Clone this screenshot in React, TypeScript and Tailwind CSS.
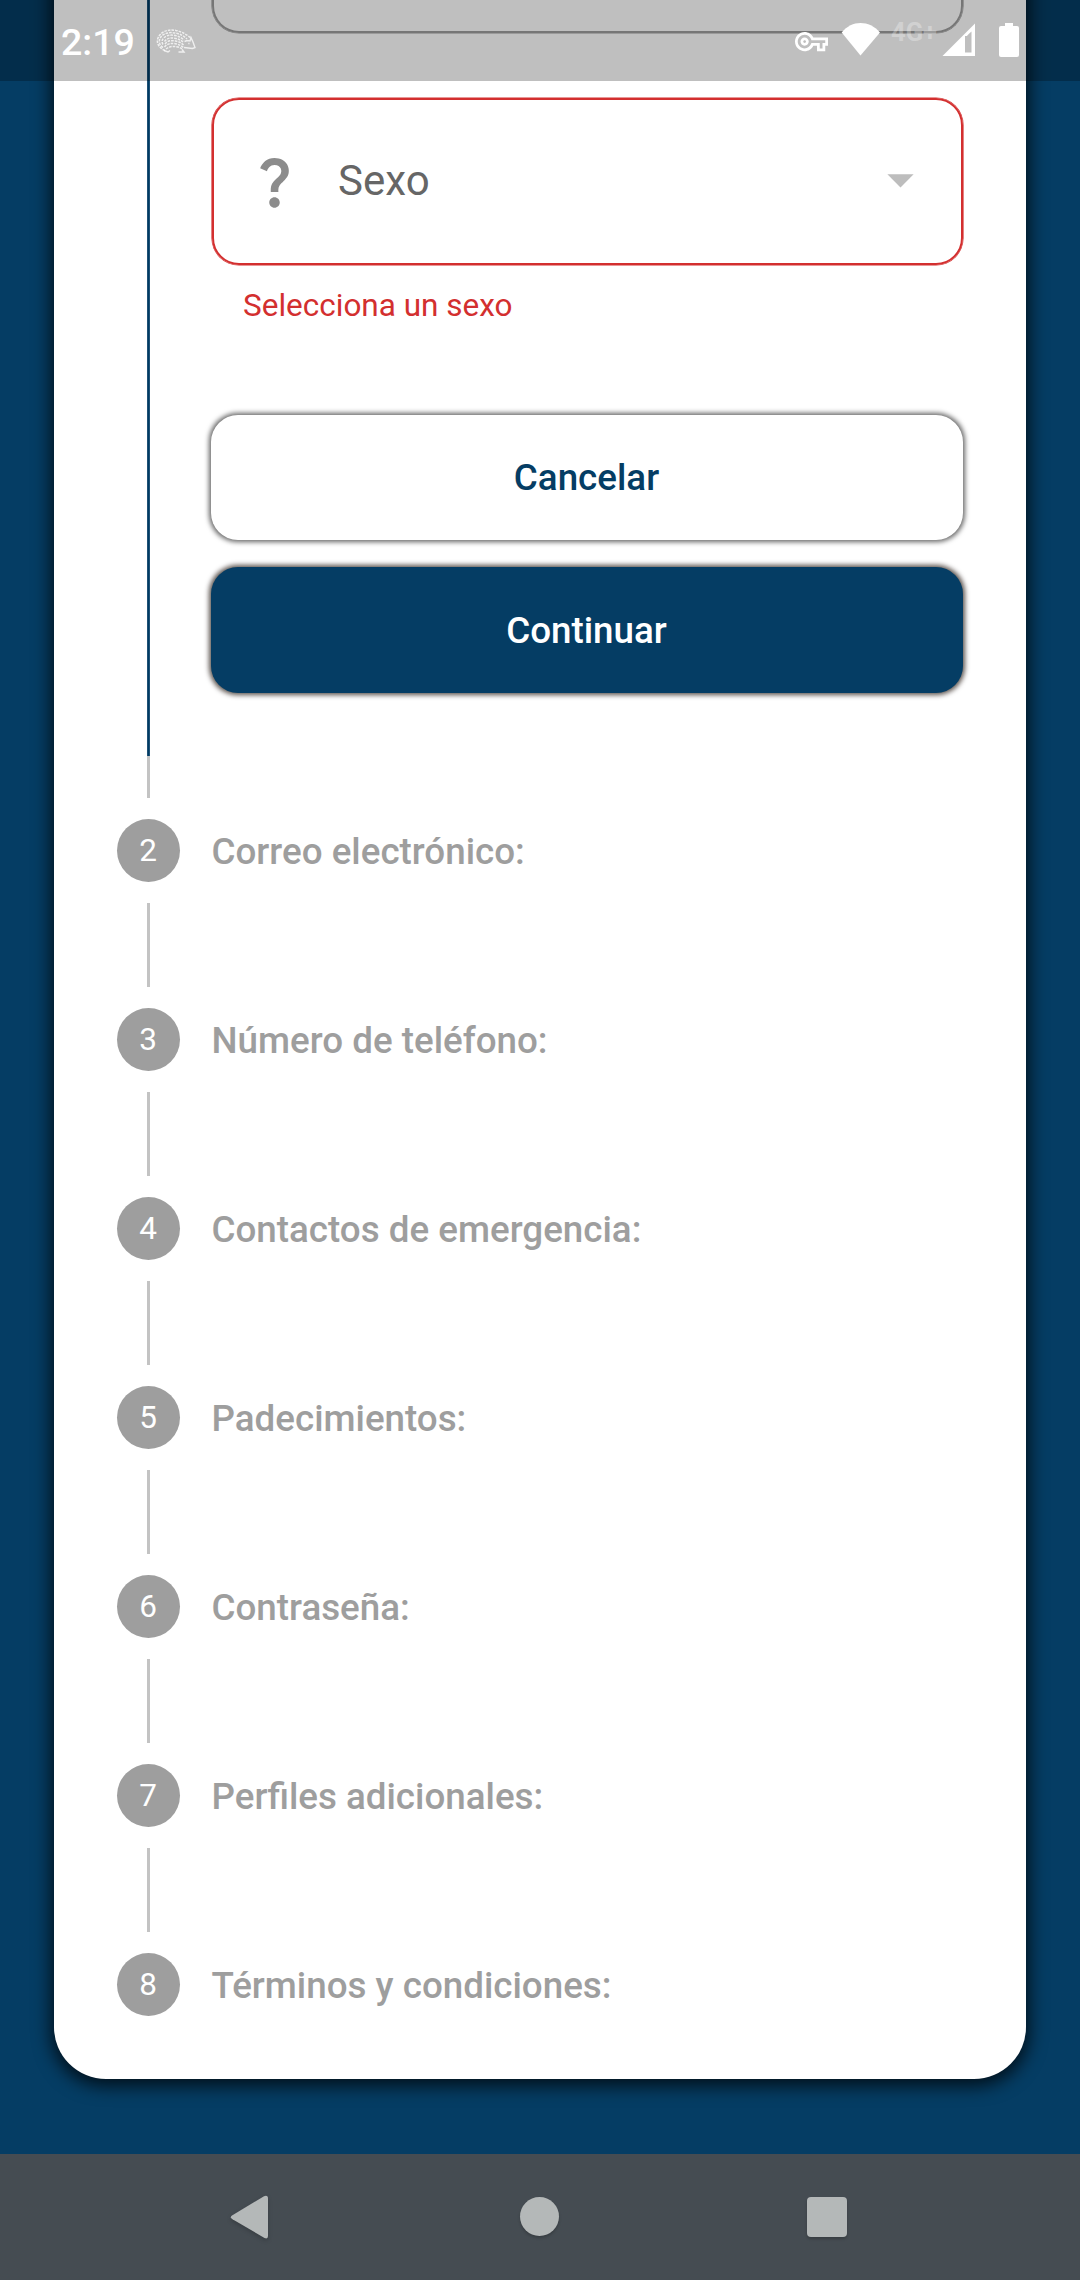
import React from "react";

const pending = [
  { n: 2, label: "Correo electrónico:" },
  { n: 3, label: "Número de teléfono:" },
  { n: 4, label: "Contactos de emergencia:" },
  { n: 5, label: "Padecimientos:" },
  { n: 6, label: "Contraseña:" },
  { n: 7, label: "Perfiles adicionales:" },
  { n: 8, label: "Términos y condiciones:" },
];

function Hedgehog() {
  return (
    <svg className="mt-[29px] ml-[21px] h-[24px] w-[40px]" viewBox="0 0 40 24" fill="none" stroke="#fff" strokeOpacity="0.75">
      <g strokeWidth="1.5" strokeDasharray="2.6 1">
        <path d="M9 21.500C3 19 0 14 2 9C5 2 13 0 20 1.500C26 2.500 31 6 35 9" />
        <path d="M7 18.500C3 16 2.500 12 4.500 8.500C7 4.500 13 2.800 19 4C24 4.800 28 7 31 10" />
        <path d="M7 15.500C5.500 13 6 10.500 8 8.700C11 6 15 5.600 19.500 6.600C23.500 7.500 26 9 28 11" />
        <path d="M8.500 12.500C11 9 14.500 8.500 18.500 9.200C22.500 10 25 11 27.500 13.500" />
        <path d="M9 15C11.500 11.500 15.500 11.200 19.500 12C23 12.700 25.500 14 27.500 16" />
        <path d="M8.500 18C11.500 14.500 15.500 14 19.500 14.700C23 15.500 25.500 17 27.500 18.500" />
        <path d="M10 20C13 17.500 17 17 20.500 17.700C23.500 18.300 25 19 27 20.500" />
      </g>
      <g strokeWidth="1.4">
        <path d="M28.500 12.500L31 11.500L34 12L35 8.500L37 13L39 18.500L36.500 19.500L28 18.500" />
        <path d="M8 21.500L12 23L14 21.500M22.500 23H28L26 20.500" />
        <path d="M32.300 14.500h1.200" />
      </g>
    </svg>
  );
}

function StatusBar() {
  return (
    <div className="absolute inset-x-0 top-0 z-10 flex h-[81px] items-start bg-black/25 text-white">
      <span className="mt-[20px] ml-[61px] w-[74px] text-[37.500px] leading-[44px] font-medium whitespace-nowrap">2:19</span>
      <Hedgehog />
      <div className="ml-auto flex items-start">
        <svg className="mt-[25px] h-[33px] w-[33px]" viewBox="0 0 24 24" fill="currentColor">
          <path d="M22 19h-6v-4h-2.680c-1.140 2.420-3.600 4-6.320 4-3.860 0-7-3.140-7-7s3.140-7 7-7c2.720 0 5.170 1.580 6.320 4H24v6h-2v4zm-4-2h2v-4h2v-2H11.940l-.23-.67C11.010 8.340 9.110 7 7 7c-2.760 0-5 2.240-5 5s2.240 5 5 5c2.110 0 4.010-1.340 4.710-3.330l.23-.67H18v4zM7 15c-1.650 0-3-1.350-3-3s1.350-3 3-3 3 1.350 3 3-1.350 3-3 3zm0-4c-.55 0-1 .45-1 1s.45 1 1 1 1-.45 1-1-.45-1-1-1z" />
        </svg>
        <svg className="mt-[23px] ml-[13px] h-[33px] w-[40px]" viewBox="0 0 40 33" fill="currentColor">
          <path d="M0.700 9.500C6 3 12.500 0 19.500 0C26.500 0 33.500 3 39 9.500L19.500 32.500Z" />
        </svg>
        <span className="mt-[17px] ml-[10px] w-[46px] text-[25.500px] leading-[30px] font-bold text-white/30">4G+</span>
        <svg className="mt-[23px] ml-[5px] h-[33px] w-[33px]" viewBox="0 0 33 33" fill="currentColor" fillRule="evenodd">
          <path d="M0.500 33L33 0.500V33ZM23 13V29.500H29.500V8.500C27 11 25.500 12 25 13Z" />
        </svg>
        <svg className="mt-[23px] mr-[61px] ml-[24px] h-[34px] w-[20px]" viewBox="0 0 20 34" fill="currentColor">
          <path d="M6 0H14V3H18Q20 3 20 5V32Q20 34 18 34H2Q0 34 0 32V5Q0 3 2 3H6Z" />
        </svg>
      </div>
    </div>
  );
}

function ActiveStep() {
  return (
    <section className="flex gap-[32px]">
      <div className="flex w-[63px] justify-center">
        <div className="w-[3px] border-x border-[#1e5075] bg-[#003b63]" />
      </div>
      <div className="flex h-[820px] w-[751px] flex-col">
        <div className="h-[97px] rounded-b-[27px] border-2 border-t-0 border-[#9e9e9e] shadow-[0_0_0_0.6px_#9e9e9e]" />
        <div className="mt-[65px] flex h-[167px] items-center rounded-[27px] border-2 border-[#d32f2f] pr-[29px] pl-[29px] shadow-[0_0_0_0.6px_#d32f2f]">
          <svg className="h-[63px] w-[63px] text-[#8c8c8c]" viewBox="0 0 24 24" fill="currentColor">
            <path d="M11.070 12.850c.77-1.390 2.250-2.210 3.110-3.440.91-1.290.4-3.700-2.180-3.700-1.690 0-2.520 1.280-2.870 2.340L6.540 6.960C7.250 4.830 9.180 3 11.990 3c2.350 0 3.960 1.070 4.780 2.410.7 1.150 1.110 3.300.03 4.900-1.200 1.770-2.350 2.310-2.970 3.450-.25.46-.35.76-.35 2.240h-2.890c-.01-.78-.13-2.050.48-3.150zM14 20c0 1.100-.9 2-2 2s-2-.9-2-2 .9-2 2-2 2 .9 2 2z" />
          </svg>
          <span className="mb-[1px] ml-[32px] text-[42px] leading-[50px] text-[#666666]">Sexo</span>
          <svg className="mb-[4px] ml-auto h-[63px] w-[63px] text-[#bdbdbd]" viewBox="0 0 24 24" fill="currentColor">
            <path d="M7 10l5 5 5-5z" />
          </svg>
        </div>
        <p className="mt-[22px] ml-[31px] text-[31.500px] leading-[38px] text-[#d32f2f]">Selecciona un sexo</p>
        <button className="mt-[90px] -ml-px h-[125px] rounded-[27px] bg-white pt-[1px] pr-[1px] text-[36.750px] font-medium text-[#053d64] shadow-[0_0_5px_1.500px_rgba(0,0,0,0.6)]">
          Cancelar
        </button>
        <button className="mt-[27px] -ml-px h-[126px] rounded-[27px] bg-[#053d64] pt-[1px] pr-[1px] text-[36.750px] font-medium text-white shadow-[0_0_5px_1.500px_rgba(20,8,0,0.7)]">
          Continuar
        </button>
      </div>
    </section>
  );
}

export default function App() {
  return (
    <div className="relative flex h-[2280px] w-[1080px] flex-col overflow-hidden bg-[#053d64] font-['Roboto',sans-serif]">
      <StatusBar />
      <main className="mx-[54px] -mt-[64px] h-[2143px] rounded-b-[52px] bg-white px-[63px] shadow-[0_4px_18px_3px_rgba(0,0,0,0.75)]">
        <ActiveStep />
        <div className="ml-[30px] h-[42px] w-[3px] bg-[#c3c3c3]" />
        <ol className="mt-[21px]">
          {pending.map(({ n, label }) => (
            <li key={n} className="h-[189px] last:h-[63px]">
              <div className="flex h-[63px] items-center gap-[31.500px]">
                <span className="flex h-[63px] w-[63px] items-center justify-center rounded-full bg-[#9e9e9e] pr-[1px] pb-[1px] text-[31.500px] leading-[37px] text-white">
                  {n}
                </span>
                <span className="pt-[2px] text-[36.750px] leading-[44px] font-medium whitespace-nowrap text-[#9e9e9e]">{label}</span>
              </div>
              {n < 8 && <div className="mt-[21px] ml-[30px] h-[84px] w-[3px] bg-[#c3c3c3]" />}
            </li>
          ))}
        </ol>
      </main>
      <nav className="mt-[75px] flex h-[126px] items-start bg-[#454c52] text-[#b4b8b8]">
        <svg className="mt-[41px] ml-[230px] h-[46px] w-[40px] drop-shadow-[0_2px_2px_rgba(0,0,0,0.2)]" viewBox="0 0 40 46" fill="currentColor">
          <path d="M2 20.500L34 1.200Q38 -0.300 38 3.500V41Q38 44.500 34.500 43L2.500 24.300Q-0.500 22.300 2 20.500Z" />
        </svg>
        <span className="mt-[43px] ml-[250px] h-[39px] w-[39px] rounded-full bg-[#b4b8b8] shadow-[0_2px_3px_rgba(0,0,0,0.2)]" />
        <span className="mt-[43px] ml-[248px] h-[40px] w-[40px] rounded-[4px] bg-[#b4b8b8] shadow-[0_2px_3px_rgba(0,0,0,0.2)]" />
      </nav>
    </div>
  );
}
